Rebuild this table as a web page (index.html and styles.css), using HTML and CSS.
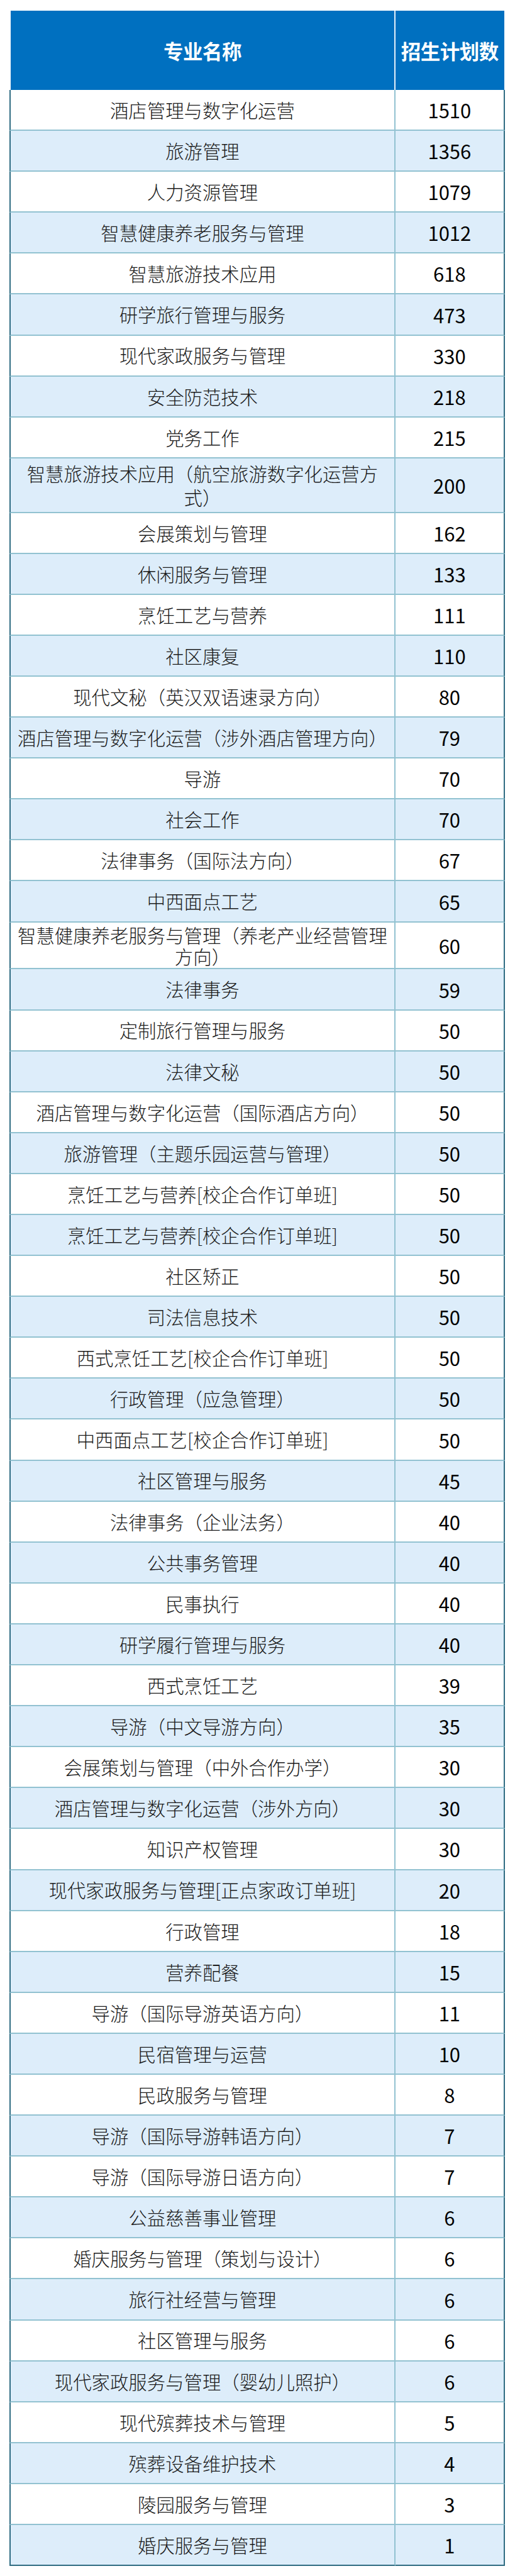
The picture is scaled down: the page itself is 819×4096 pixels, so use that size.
FILE: index.html
```
<!DOCTYPE html>
<html lang="zh-CN">
<head>
<meta charset="utf-8">
<title>招生计划</title>
<link rel="stylesheet" href="styles.css">
</head>
<body>
<div class="sheet">
<table class="plan">
<colgroup><col class="c-name"><col class="c-num"></colgroup>
<thead>
<tr><th class="name">专业名称</th><th class="num">招生计划数</th></tr>
</thead>
<tbody>
<tr><td class="name">酒店管理与数字化运营</td><td class="num">1510</td></tr>
<tr><td class="name">旅游管理</td><td class="num">1356</td></tr>
<tr><td class="name">人力资源管理</td><td class="num">1079</td></tr>
<tr><td class="name">智慧健康养老服务与管理</td><td class="num">1012</td></tr>
<tr><td class="name">智慧旅游技术应用</td><td class="num">618</td></tr>
<tr><td class="name">研学旅行管理与服务</td><td class="num">473</td></tr>
<tr><td class="name">现代家政服务与管理</td><td class="num">330</td></tr>
<tr><td class="name">安全防范技术</td><td class="num">218</td></tr>
<tr><td class="name">党务工作</td><td class="num">215</td></tr>
<tr class="two-a"><td class="name">智慧旅游技术应用（航空旅游数字化运营方<br>式）</td><td class="num">200</td></tr>
<tr><td class="name">会展策划与管理</td><td class="num">162</td></tr>
<tr><td class="name">休闲服务与管理</td><td class="num">133</td></tr>
<tr><td class="name">烹饪工艺与营养</td><td class="num">111</td></tr>
<tr><td class="name">社区康复</td><td class="num">110</td></tr>
<tr><td class="name">现代文秘（英汉双语速录方向）</td><td class="num">80</td></tr>
<tr><td class="name">酒店管理与数字化运营（涉外酒店管理方向）</td><td class="num">79</td></tr>
<tr><td class="name">导游</td><td class="num">70</td></tr>
<tr><td class="name">社会工作</td><td class="num">70</td></tr>
<tr><td class="name">法律事务（国际法方向）</td><td class="num">67</td></tr>
<tr><td class="name">中西面点工艺</td><td class="num">65</td></tr>
<tr class="two-b"><td class="name">智慧健康养老服务与管理（养老产业经营管理<br>方向）</td><td class="num">60</td></tr>
<tr><td class="name">法律事务</td><td class="num">59</td></tr>
<tr><td class="name">定制旅行管理与服务</td><td class="num">50</td></tr>
<tr><td class="name">法律文秘</td><td class="num">50</td></tr>
<tr><td class="name">酒店管理与数字化运营（国际酒店方向）</td><td class="num">50</td></tr>
<tr><td class="name">旅游管理（主题乐园运营与管理）</td><td class="num">50</td></tr>
<tr><td class="name">烹饪工艺与营养[校企合作订单班]</td><td class="num">50</td></tr>
<tr><td class="name">烹饪工艺与营养[校企合作订单班]</td><td class="num">50</td></tr>
<tr><td class="name">社区矫正</td><td class="num">50</td></tr>
<tr><td class="name">司法信息技术</td><td class="num">50</td></tr>
<tr><td class="name">西式烹饪工艺[校企合作订单班]</td><td class="num">50</td></tr>
<tr><td class="name">行政管理（应急管理）</td><td class="num">50</td></tr>
<tr><td class="name">中西面点工艺[校企合作订单班]</td><td class="num">50</td></tr>
<tr><td class="name">社区管理与服务</td><td class="num">45</td></tr>
<tr><td class="name">法律事务（企业法务）</td><td class="num">40</td></tr>
<tr><td class="name">公共事务管理</td><td class="num">40</td></tr>
<tr><td class="name">民事执行</td><td class="num">40</td></tr>
<tr><td class="name">研学履行管理与服务</td><td class="num">40</td></tr>
<tr><td class="name">西式烹饪工艺</td><td class="num">39</td></tr>
<tr><td class="name">导游（中文导游方向）</td><td class="num">35</td></tr>
<tr><td class="name">会展策划与管理（中外合作办学）</td><td class="num">30</td></tr>
<tr><td class="name">酒店管理与数字化运营（涉外方向）</td><td class="num">30</td></tr>
<tr><td class="name">知识产权管理</td><td class="num">30</td></tr>
<tr><td class="name">现代家政服务与管理[正点家政订单班]</td><td class="num">20</td></tr>
<tr><td class="name">行政管理</td><td class="num">18</td></tr>
<tr><td class="name">营养配餐</td><td class="num">15</td></tr>
<tr><td class="name">导游（国际导游英语方向）</td><td class="num">11</td></tr>
<tr><td class="name">民宿管理与运营</td><td class="num">10</td></tr>
<tr><td class="name">民政服务与管理</td><td class="num">8</td></tr>
<tr><td class="name">导游（国际导游韩语方向）</td><td class="num">7</td></tr>
<tr><td class="name">导游（国际导游日语方向）</td><td class="num">7</td></tr>
<tr><td class="name">公益慈善事业管理</td><td class="num">6</td></tr>
<tr><td class="name">婚庆服务与管理（策划与设计）</td><td class="num">6</td></tr>
<tr><td class="name">旅行社经营与管理</td><td class="num">6</td></tr>
<tr><td class="name">社区管理与服务</td><td class="num">6</td></tr>
<tr><td class="name">现代家政服务与管理（婴幼儿照护）</td><td class="num">6</td></tr>
<tr><td class="name">现代殡葬技术与管理</td><td class="num">5</td></tr>
<tr><td class="name">殡葬设备维护技术</td><td class="num">4</td></tr>
<tr><td class="name">陵园服务与管理</td><td class="num">3</td></tr>
<tr><td class="name">婚庆服务与管理</td><td class="num">1</td></tr>
</tbody>
</table>
</div>
</body>
</html>
```
FILE: styles.css
```
* {
  box-sizing: border-box;
}

body {
  margin: 0;
  background: #ffffff;
}

.sheet {
  padding: 16.8px 0 0 14.8px;
}

.plan {
  border-collapse: separate;
  border-spacing: 0;
  table-layout: fixed;
  width: 787.8px;
  font-family: "Noto Sans CJK SC", "Noto Sans", sans-serif;
}

.plan .c-name {
  width: 614.3px;
}

.plan .c-num {
  width: 173.5px;
}

.plan thead tr {
  height: 126.2px;
}

.plan th {
  padding: 0;
  background: #0070c0;
  color: #ffffff;
  font-size: 31.5px;
  font-weight: 700;
  text-align: center;
  vertical-align: middle;
  white-space: nowrap;
  letter-spacing: -0.5px;
}

.plan th.name {
  border-left: 2px solid #ffffff;
  border-right: 2px solid #e4eff8;
}

.plan th.num {
  border-right: 1px solid #ffffff;
}

.plan tbody tr {
  height: 65.1px;
}

.plan tbody tr:nth-child(even) {
  background: #ddedfa;
}

.plan td {
  padding: 0;
  text-align: center;
  vertical-align: middle;
  border-bottom: 2px solid #92c2d1;
}

.plan td.name {
  font-size: 29.4px;
  font-weight: 300;
  line-height: 1.2;
  color: #1b1b1b;
  border-left: 2px solid #2f6c82;
  border-right: 2px solid #92c2d1;
  white-space: nowrap;
}

.plan td.num {
  font-size: 31px;
  font-weight: 400;
  color: #000000;
  border-right: 2px solid #2f6c82;
}

.plan tbody tr:last-child td {
  border-bottom-color: #2f6c82;
}

.plan tbody tr.two-a {
  height: 86.8px;
}

.plan tbody tr.two-a td.name {
  line-height: 38.5px;
}

.plan tbody tr.two-b {
  height: 74.9px;
}

.plan tbody tr.two-b td.name {
  line-height: 34.5px;
}
```
